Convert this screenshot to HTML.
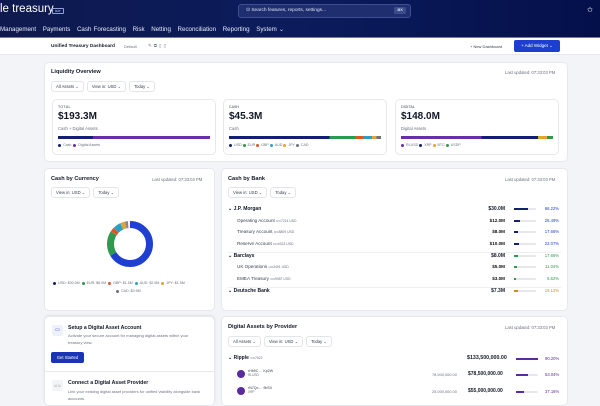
<!DOCTYPE html>
<html><head><style>
*{box-sizing:border-box;margin:0;padding:0}
body{width:600px;height:400px;overflow:hidden;background:#f3f4f7;font-family:"Liberation Sans",sans-serif;color:#111827;position:relative}
.a{position:absolute}
.hdr{left:0;top:0;width:600px;height:37px;background:linear-gradient(90deg,#0e1a4f,#0b1b5c 50%,#04104a)}
.card{background:#fff;border:1px solid #e6e8ee;border-radius:5px}
.t{font-size:5.6px;font-weight:bold;color:#111827}
.s{font-size:4.2px;color:#6b7280}
.bs{display:flex;gap:3px}
.btn{border:1px solid #e3e5ea;border-radius:3px;font-size:4.2px;color:#374151;padding:2px 4px;background:#fff;white-space:nowrap}
.dot{display:inline-block;width:3px;height:3px;border-radius:50%;margin-right:2px;vertical-align:middle}
.row{font-size:4.6px;color:#374151}
.bar{width:22px;height:2px;background:#e5e7eb;border-radius:1px}
</style></head><body>
<div class="a hdr"></div>
<div class="a" style="left:0;top:3px;font-size:11.5px;color:#fff">le treasury</div>
<div class="a" style="left:52px;top:8px;width:12px;height:6px;border:1px solid #8fa0d8;border-radius:1px;font-size:3px;color:#cfd8f5;text-align:center;line-height:4px">RAT</div>
<div class="a" style="left:238px;top:4px;width:173px;height:14px;border:1px solid #3c4f94;border-radius:3px;background:#1e2e6e"></div>
<div class="a" style="left:246px;top:7.5px;font-size:4.8px;color:#dbe2f7">⊙ Search features, reports, settings...</div>
<div class="a" style="left:394px;top:7px;width:12px;height:7px;background:#3a4c8c;border-radius:1px;font-size:3.5px;color:#fff;text-align:center;line-height:7px">⌘K</div>
<div class="a" style="left:587px;top:6px;font-size:7px;color:#fff">✩</div>
<div class="a" style="left:0;top:26px;font-size:6.2px;color:#e6ebfa;white-space:nowrap;word-spacing:0.5px">Management&nbsp;&nbsp;&nbsp;Payments&nbsp;&nbsp;&nbsp;Cash Forecasting&nbsp;&nbsp;&nbsp;Risk&nbsp;&nbsp;&nbsp;Netting&nbsp;&nbsp;&nbsp;Reconciliation&nbsp;&nbsp;&nbsp;Reporting&nbsp;&nbsp;&nbsp;System ⌄</div>
<div class="a" style="left:0;top:37px;width:600px;height:18px;background:#fff;border-top:1px solid #7b6fc0;border-bottom:1px solid #e5e7eb"></div>
<div class="a" style="left:51px;top:43.5px;font-size:4.8px;font-weight:bold">Unified Treasury Dashboard</div>
<div class="a" style="left:124px;top:44px;font-size:4px;color:#6b7280">Default</div>
<div class="a" style="left:148px;top:42.5px;font-size:4.5px;color:#6b7280;letter-spacing:2px">✎⧉▯▯</div>
<div class="a" style="left:470px;top:44px;font-size:4px;color:#374151">+ New Dashboard</div>
<div class="a" style="left:514px;top:40px;width:46px;height:12px;background:#1d3fcf;border-radius:2px;font-size:4.5px;color:#fff;line-height:12px;text-align:center">+ Add Widget ⌄</div>

<div class="a card" style="left:44px;top:62px;width:524px;height:100px"></div>
<div class="a t" style="left:51px;top:69px">Liquidity Overview</div>
<div class="a s" style="left:505px;top:70px">Last updated: 07:33:03 PM</div>
<div class="a bs" style="left:51px;top:81px"><span class="btn">All Assets ⌄</span><span class="btn">View in: USD ⌄</span><span class="btn">Today ⌄</span></div>

<div class="a card" style="left:52px;top:99px;width:164px;height:56px"></div>
<div class="a" style="left:58px;top:105px;font-size:3.6px;color:#374151;letter-spacing:.3px">TOTAL</div>
<div class="a" style="left:58px;top:111px;font-size:10px;font-weight:bold">$193.3M</div>
<div class="a s" style="left:58px;top:126px">Cash + Digital Assets</div>
<div class="a" style="left:58px;top:136px;width:152px;height:3px;background:linear-gradient(90deg,#12206e 23%,#6b2fa3 23%)"></div>
<div class="a s" style="left:58px;top:143px;font-size:3.6px"><span class="dot" style="background:#12206e"></span>Cash &nbsp;<span class="dot" style="background:#6b2fa3"></span>Digital Assets</div>

<div class="a card" style="left:223px;top:99px;width:164px;height:56px"></div>
<div class="a" style="left:229px;top:105px;font-size:3.6px;color:#374151">CASH</div>
<div class="a" style="left:229px;top:111px;font-size:10px;font-weight:bold">$45.3M</div>
<div class="a s" style="left:229px;top:126px">Cash</div>
<div class="a" style="left:229px;top:136px;width:152px;height:3px;background:linear-gradient(90deg,#12206e 66%,#2e9a4f 66% 83%,#d9572a 83% 88%,#2ba0c4 88% 94%,#e0a43a 94% 97%,#6b7280 97%)"></div>
<div class="a s" style="left:229px;top:143px;font-size:3.6px"><span class="dot" style="background:#12206e"></span>USD <span class="dot" style="background:#2e9a4f"></span>EUR <span class="dot" style="background:#d9572a"></span>GBP <span class="dot" style="background:#2ba0c4"></span>AUD <span class="dot" style="background:#e0a43a"></span>JPY <span class="dot" style="background:#6b7280"></span>CAD</div>

<div class="a card" style="left:395px;top:99px;width:164px;height:56px"></div>
<div class="a" style="left:401px;top:105px;font-size:3.6px;color:#374151">DIGITAL</div>
<div class="a" style="left:401px;top:111px;font-size:10px;font-weight:bold">$148.0M</div>
<div class="a s" style="left:401px;top:126px">Digital Assets</div>
<div class="a" style="left:401px;top:136px;width:152px;height:3px;background:linear-gradient(90deg,#6b2fa3 53%,#12206e 53% 90%,#e0a43a 90% 96%,#2e9a4f 96%)"></div>
<div class="a s" style="left:401px;top:143px;font-size:3.6px"><span class="dot" style="background:#6b2fa3"></span>RLUSD <span class="dot" style="background:#12206e"></span>XRP <span class="dot" style="background:#e0a43a"></span>BTC <span class="dot" style="background:#2e9a4f"></span>USDP</div>

<div class="a card" style="left:44px;top:168px;width:171px;height:143px"></div>
<div class="a t" style="left:51px;top:176px">Cash by Currency</div>
<div class="a s" style="left:152px;top:177px">Last updated: 07:33:03 PM</div>
<div class="a bs" style="left:51px;top:187px"><span class="btn">View in: USD ⌄</span><span class="btn">Today ⌄</span></div>
<svg class="a" style="left:105px;top:219px" width="50" height="50" viewBox="0 0 50 50">
<g fill="none" stroke-width="7" transform="rotate(-90 25 25)">
<circle cx="25" cy="25" r="19.5" stroke="#1e3fcf" stroke-dasharray="81.3 200"/>
<circle cx="25" cy="25" r="19.5" stroke="#2e9a4f" stroke-dasharray="21.6 200" stroke-dashoffset="-81.3"/>
<circle cx="25" cy="25" r="19.5" stroke="#d9572a" stroke-dasharray="4.1 200" stroke-dashoffset="-102.9"/>
<circle cx="25" cy="25" r="19.5" stroke="#2ba0c4" stroke-dasharray="6.8 200" stroke-dashoffset="-107"/>
<circle cx="25" cy="25" r="19.5" stroke="#e0a43a" stroke-dasharray="4.1 200" stroke-dashoffset="-113.8"/>
<circle cx="25" cy="25" r="19.5" stroke="#888" stroke-dasharray="2.6 200" stroke-dashoffset="-117.9"/>
</g></svg>
<div class="a s" style="left:53px;top:281px;font-size:3.6px;white-space:nowrap"><span class="dot" style="background:#12206e"></span>USD: $30.0M &nbsp;<span class="dot" style="background:#2e9a4f"></span>EUR: $8.0M &nbsp;<span class="dot" style="background:#d9572a"></span>GBP: $1.5M &nbsp;<span class="dot" style="background:#2ba0c4"></span>AUD: $2.5M &nbsp;<span class="dot" style="background:#e0a43a"></span>JPY: $1.5M</div>
<div class="a s" style="left:116px;top:289px;font-size:3.6px"><span class="dot" style="background:#6b7280"></span>CAD: $0.9M</div>

<div class="a card" style="left:221px;top:168px;width:347px;height:143px"></div>
<div class="a t" style="left:228px;top:176px">Cash by Bank</div>
<div class="a s" style="left:505px;top:177px">Last updated: 07:33:03 PM</div>
<div class="a bs" style="left:228px;top:187px"><span class="btn">View in: USD ⌄</span><span class="btn">Today ⌄</span></div>
<div class="a" style="left:228px;top:206px;width:333px;font-size:5px">
<div style="position:relative;height:11.7px"><b>⌄ J.P. Morgan</b><span style="position:absolute;right:56px;font-weight:bold">$30.0M</span><span class="bar" style="position:absolute;left:286px;top:2px"><span style="display:block;width:14px;height:2px;background:#12206e"></span></span><span style="position:absolute;right:2px;color:#1e3fcf;font-size:4.2px">66.22%</span></div>
<div class="row" style="position:relative;height:11.7px;padding-left:9px">Operating Account <span class="s" style="font-size:3.4px">••••7214 USD</span><span style="position:absolute;right:56px;font-weight:bold;color:#111">$12.0M</span><span class="bar" style="position:absolute;left:286px;top:2px"><span style="display:block;width:6px;height:2px;background:#12206e"></span></span><span style="position:absolute;right:2px;color:#1e3fcf;font-size:4.2px">26.49%</span></div>
<div class="row" style="position:relative;height:11.7px;padding-left:9px">Treasury Account <span class="s" style="font-size:3.4px">••••8809 USD</span><span style="position:absolute;right:56px;font-weight:bold;color:#111">$8.0M</span><span class="bar" style="position:absolute;left:286px;top:2px"><span style="display:block;width:4px;height:2px;background:#12206e"></span></span><span style="position:absolute;right:2px;color:#1e3fcf;font-size:4.2px">17.66%</span></div>
<div class="row" style="position:relative;height:11.7px;padding-left:9px;border-bottom:1px solid #eef0f3">Reserve Account <span class="s" style="font-size:3.4px">••••4323 USD</span><span style="position:absolute;right:56px;font-weight:bold;color:#111">$10.0M</span><span class="bar" style="position:absolute;left:286px;top:2px"><span style="display:block;width:5px;height:2px;background:#12206e"></span></span><span style="position:absolute;right:2px;color:#1e3fcf;font-size:4.2px">22.07%</span></div>
<div style="position:relative;height:11.7px"><b>⌄ Barclays</b><span style="position:absolute;right:56px;font-weight:bold">$8.0M</span><span class="bar" style="position:absolute;left:286px;top:2px"><span style="display:block;width:4px;height:2px;background:#2e9a4f"></span></span><span style="position:absolute;right:2px;color:#2e9a4f;font-size:4.2px">17.66%</span></div>
<div class="row" style="position:relative;height:11.7px;padding-left:9px">UK Operations <span class="s" style="font-size:3.4px">••••3491 USD</span><span style="position:absolute;right:56px;font-weight:bold;color:#111">$5.0M</span><span class="bar" style="position:absolute;left:286px;top:2px"><span style="display:block;width:3px;height:2px;background:#2e9a4f"></span></span><span style="position:absolute;right:2px;color:#2e9a4f;font-size:4.2px">11.04%</span></div>
<div class="row" style="position:relative;height:11.7px;padding-left:9px;border-bottom:1px solid #eef0f3">EMEA Treasury <span class="s" style="font-size:3.4px">••••9087 USD</span><span style="position:absolute;right:56px;font-weight:bold;color:#111">$3.0M</span><span class="bar" style="position:absolute;left:286px;top:2px"><span style="display:block;width:2px;height:2px;background:#2e9a4f"></span></span><span style="position:absolute;right:2px;color:#2e9a4f;font-size:4.2px">6.62%</span></div>
<div style="position:relative;height:11.7px"><b>⌄ Deutsche Bank</b><span style="position:absolute;right:56px;font-weight:bold">$7.3M</span><span class="bar" style="position:absolute;left:286px;top:2px"><span style="display:block;width:4px;height:2px;background:#d08a2a"></span></span><span style="position:absolute;right:2px;color:#d08a2a;font-size:4.2px">16.12%</span></div>
</div>

<div class="a card" style="left:44px;top:316px;width:171px;height:90px;box-shadow:0 -1px 2px rgba(0,0,0,.08)"></div>
<div class="a" style="left:52px;top:325px;width:11px;height:11px;background:#eef1fb;border-radius:2px;font-size:5px;color:#1e3fcf;text-align:center;line-height:11px">▭</div>
<div class="a" style="left:68px;top:325px;font-size:5.2px;font-weight:bold">Setup a Digital Asset Account</div>
<div class="a s" style="left:68px;top:333px;width:125px;line-height:6.5px;font-size:4px">Activate your secure account for managing digital assets within your treasury view.</div>
<div class="a" style="left:51px;top:352px;width:33px;height:11px;background:#1a34b8;border-radius:2px;font-size:4.2px;color:#fff;text-align:center;line-height:11px">Get Started</div>
<div class="a" style="left:44px;top:371px;width:171px;border-top:1px solid #e6e8ee"></div>
<div class="a" style="left:52px;top:380px;width:11px;height:11px;background:#f3f4f6;border-radius:2px;font-size:4px;color:#6b7280;text-align:center;line-height:11px">⊂⊃</div>
<div class="a" style="left:68px;top:380px;font-size:5.2px;font-weight:bold">Connect a Digital Asset Provider</div>
<div class="a s" style="left:68px;top:389px;width:135px;line-height:6.5px;font-size:4px">Link your existing digital asset providers for unified visibility alongside bank accounts.</div>

<div class="a card" style="left:221px;top:316px;width:347px;height:90px"></div>
<div class="a t" style="left:228px;top:324px">Digital Assets by Provider</div>
<div class="a s" style="left:505px;top:325px">Last updated: 07:33:03 PM</div>
<div class="a bs" style="left:228px;top:336px"><span class="btn">All Assets ⌄</span><span class="btn">View in: USD ⌄</span><span class="btn">Today ⌄</span></div>
<div class="a" style="left:228px;top:355px;font-size:5px;font-weight:bold">⌄ Ripple <span class="s" style="font-weight:normal;font-size:3.4px">••••7622</span></div>
<div class="a" style="left:467px;top:355px;font-size:5.3px;font-weight:bold">$133,500,000.00</div>
<div class="a" style="left:516px;top:358px;width:22px;height:2px;background:#5b2a9e"></div>
<div class="a" style="left:545px;top:356px;font-size:4.2px;color:#5b2a9e">90.20%</div>
<div class="a" style="left:237px;top:370px;width:8px;height:8px;border-radius:50%;background:#5b2a9e"></div>
<div class="a" style="left:248px;top:369px;font-size:3.6px;color:#374151">rHb9C ... Kp2W<br><span class="s" style="font-size:3.2px">RLUSD</span></div>
<div class="a s" style="left:432px;top:372px;font-size:3.9px">78,500,000.00</div>
<div class="a" style="left:468px;top:371px;font-size:5px;font-weight:bold">$78,500,000.00</div>
<div class="a bar" style="left:516px;top:374px"><div style="width:12px;height:2px;background:#5b2a9e"></div></div>
<div class="a" style="left:545px;top:372px;font-size:4.2px;color:#5b2a9e">53.04%</div>
<div class="a" style="left:237px;top:387px;width:8px;height:8px;border-radius:50%;background:#5b2a9e"></div>
<div class="a" style="left:248px;top:386px;font-size:3.6px;color:#374151">rN7Qc ... 9bSX<br><span class="s" style="font-size:3.2px">XRP</span></div>
<div class="a s" style="left:432px;top:389px;font-size:3.9px">25,000,000.00</div>
<div class="a" style="left:468px;top:388px;font-size:5px;font-weight:bold">$55,000,000.00</div>
<div class="a bar" style="left:516px;top:391px"><div style="width:8px;height:2px;background:#5b2a9e"></div></div>
<div class="a" style="left:545px;top:389px;font-size:4.2px;color:#5b2a9e">37.16%</div>
</body></html>
